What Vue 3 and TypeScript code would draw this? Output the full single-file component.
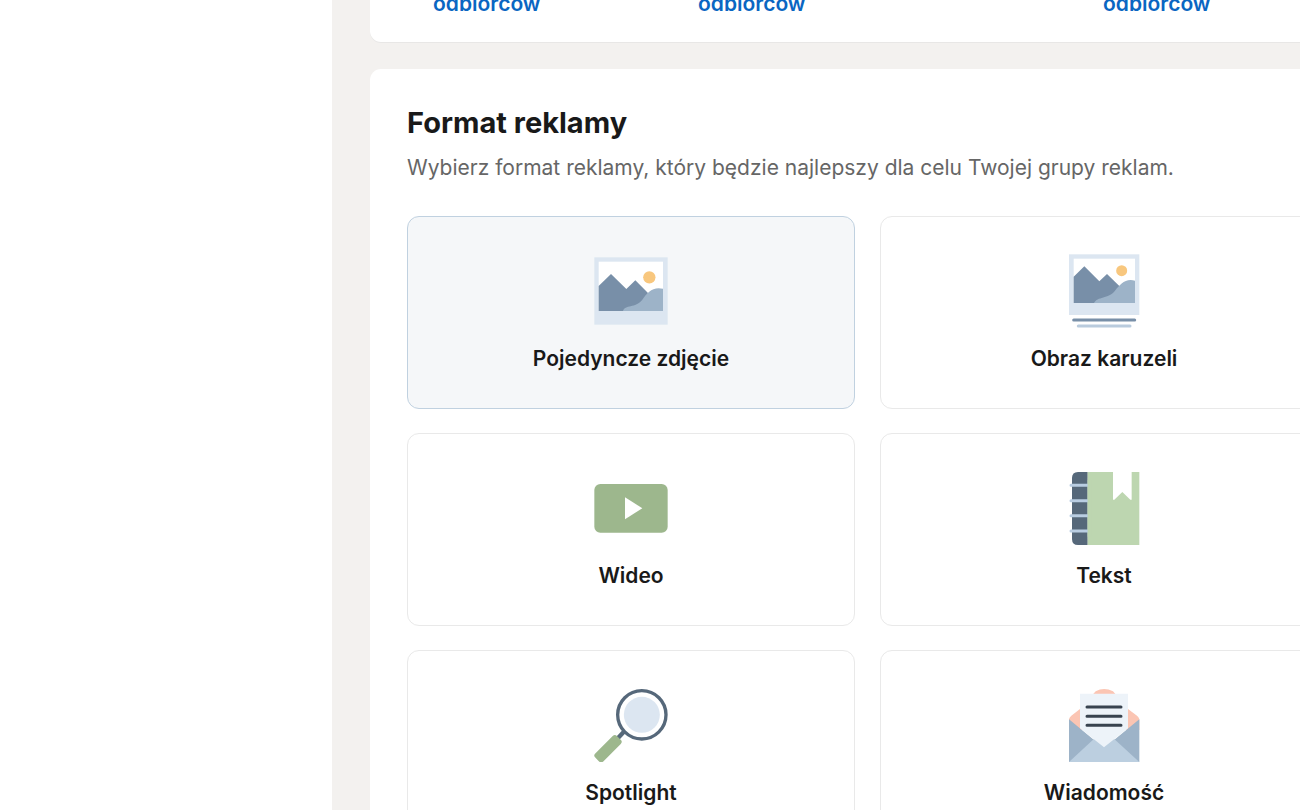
<script setup lang="ts">
import { ref } from 'vue'

type Icon = 'image' | 'carousel' | 'video' | 'text' | 'spotlight' | 'message'

interface AdFormat {
  id: Icon
  label: string
}

const audiences: string[] = ['odbiorców', 'odbiorców', 'odbiorców']

const formats: AdFormat[] = [
  { id: 'image', label: 'Pojedyncze zdjęcie' },
  { id: 'carousel', label: 'Obraz karuzeli' },
  { id: 'video', label: 'Wideo' },
  { id: 'text', label: 'Tekst' },
  { id: 'spotlight', label: 'Spotlight' },
  { id: 'message', label: 'Wiadomość' },
]

const selected = ref<Icon>('image')
</script>

<template>
  <div class="page">
    <aside class="sidebar"></aside>
    <main class="content">
      <section class="panel goals">
        <a v-for="(name, i) in audiences" :key="i" href="#" class="goal">{{ name }}</a>
      </section>

      <section class="panel formats">
        <h2 class="title">Format reklamy</h2>
        <p class="subtitle">Wybierz format reklamy, który będzie najlepszy dla celu Twojej grupy reklam.</p>

        <div class="grid">
          <button
            v-for="f in formats"
            :key="f.id"
            type="button"
            class="card"
            :class="{ selected: selected === f.id }"
            :aria-pressed="selected === f.id"
            @click="selected = f.id"
          >
            <svg v-if="f.id === 'image'" class="icon" viewBox="42 27 222 222" aria-hidden="true">
              <rect x="43" y="37" width="220" height="202" fill="#dce6f1" />
              <rect x="56" y="50" width="193" height="148" fill="#fff" />
              <circle cx="208" cy="97" r="18.5" fill="#f8c77e" />
              <path d="M56 123L93 87L139 132L166 106L204 144L185 198H56z" fill="#788fa8" />
              <path d="M129 198C135 178 166 190 187 164C202 142 218 124 249 131V198z" fill="#9db3c8" />
            </svg>

            <svg v-else-if="f.id === 'carousel'" class="icon" viewBox="36 27 222 222" aria-hidden="true">
              <rect x="42" y="28" width="211" height="182" fill="#dce6f1" />
              <rect x="56" y="41" width="184" height="133" fill="#fff" />
              <circle cx="200" cy="77" r="16.5" fill="#f8c77e" />
              <path d="M56 95L88 64L133 109L156 87L193 123L178 174H56z" fill="#788fa8" />
              <path d="M117 174C127 153 160 163 180 137C194 119 212 98 240 107V174z" fill="#9db3c8" />
              <path d="M56 225H239" stroke="#788fa8" stroke-width="9" stroke-linecap="round" />
              <path d="M70 243H225" stroke="#b9cbdd" stroke-width="9" stroke-linecap="round" />
            </svg>

            <svg v-else-if="f.id === 'video'" class="icon" viewBox="42 18 222 222" aria-hidden="true">
              <rect x="43" y="57" width="220" height="146" rx="18" fill="#9db78d" />
              <path d="M135 97L187 130L135 163z" fill="#fff" />
            </svg>

            <svg v-else-if="f.id === 'text'" class="icon" viewBox="36 33 222 222" aria-hidden="true">
              <path d="M69 36H98V255H69Q51 255 51 237V54Q51 36 69 36z" fill="#56687a" />
              <path d="M98 36H174V119H178L202 96L226 119H230V36H253V255H98z" fill="#bdd6b0" />
              <path d="M48 76H98M48 122H98M48 167H98M48 213H98" stroke="#b9cde2" stroke-width="9" stroke-linecap="round" />
              <path d="M98 60V230H110V60z" fill="#bdd6b0" />
            </svg>

            <svg v-else-if="f.id === 'spotlight'" class="icon" viewBox="42 24 222 222" aria-hidden="true">
              <path d="M133 154L112 176" stroke="#56687a" stroke-width="13" />
              <circle cx="185.5" cy="104.5" r="72.5" fill="#fff" stroke="#56687a" stroke-width="10" />
              <circle cx="185.5" cy="104.5" r="54" fill="#dce6f1" />
              <rect x="67" y="160" width="34" height="92" rx="9" transform="rotate(45 84 206)" fill="#9db78d" />
            </svg>

            <svg v-else class="icon" viewBox="36 24 222 222" aria-hidden="true">
              <path d="M42 118Q43 112 49 107L75 87L122 34Q147 20 174 34L219 87L246 107Q252 112 253 118V150H42z" fill="#fbc5b3" />
              <path d="M42 118L147 205L253 118V246H42z" fill="#9db3c8" />
              <path d="M42 246L127 167H167L253 246z" fill="#bccfe0" />
              <path d="M75 41H219V145L147 202L75 145z" fill="#edf3f9" />
              <path d="M96 81H198M96 109H198M96 136H198" stroke="#38434f" stroke-width="9" stroke-linecap="round" />
            </svg>

            <span class="label">{{ f.label }}</span>
          </button>
        </div>
      </section>
    </main>
  </div>
</template>

<style>
body {
  margin: 0;
}
</style>

<style scoped>
.page {
  display: grid;
  grid-template-columns: 332px minmax(0, 1fr);
  height: 100vh;
  overflow: hidden;
  background: #f3f1ef;
  color: #191919;
  font-family: Inter, "Liberation Sans", sans-serif;
}

.sidebar {
  background: #fff;
}

.content {
  display: flex;
  flex-direction: column;
  gap: 27px;
  min-height: 0;
  margin-right: -65px;
  padding-left: 38px;
}

.panel {
  flex: none;
  background: #fff;
  border-radius: 11px;
  box-shadow: 0 1px 0 #e8e7e6;
}

.goals {
  display: grid;
  grid-template-columns: 265px 405px auto;
  justify-content: start;
  margin-top: -11px;
  padding: 0 63px 23px;
}

.goal {
  color: #0a66c2;
  font-size: 21px;
  font-weight: 600;
  line-height: 30px;
  text-decoration: none;
}

.formats {
  padding: 34px 37px 37px;
}

.title {
  margin: 0;
  font-size: 29px;
  font-weight: 700;
  line-height: 40px;
}

.subtitle {
  margin: 10px 0 33px;
  color: #666;
  font-size: 21px;
  line-height: 30px;
}

.grid {
  display: grid;
  grid-template-columns: repeat(2, minmax(0, 1fr));
  gap: 24px 25px;
}

.card {
  display: flex;
  flex-direction: column;
  align-items: center;
  gap: 16px;
  padding: 37px 24px 34px;
  border: 1px solid #e9e9e9;
  border-radius: 12px;
  background: #fff;
  color: inherit;
  font: inherit;
  cursor: pointer;
}

.card.selected {
  border-color: #c0d1e0;
  background: #f5f7f9;
}

.icon {
  display: block;
  width: 74px;
  height: 74px;
}

.label {
  font-size: 21px;
  font-weight: 600;
  line-height: 30px;
}
</style>
